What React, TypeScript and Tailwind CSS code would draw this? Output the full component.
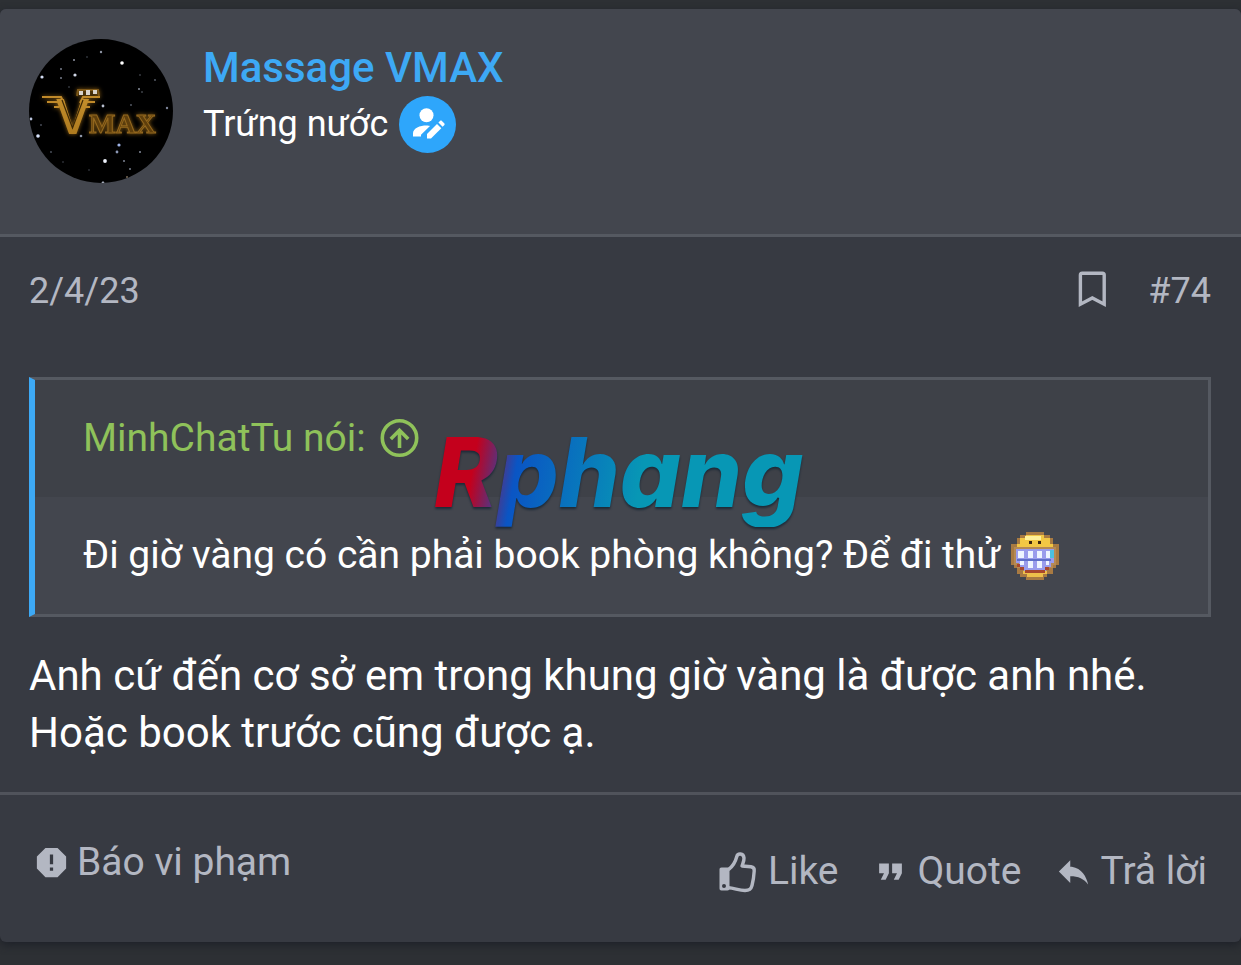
import type { ReactNode } from "react"

const stars = [
  [72, 13, 1.2, "#8d93a1"],
  [45, 21, 1, "#8f95a3"],
  [93, 24, 1.8, "#ffffff"],
  [32, 30, 1, "#777d8b"],
  [32, 39, 1, "#777d8b"],
  [13, 38, 1.6, "#d3dcf2"],
  [46, 36, 1.6, "#cfd6e6"],
  [110, 50, 1, "#8a909e"],
  [113, 53, 0.8, "#6a707c"],
  [126, 41, 0.9, "#5d636f"],
  [111, 36, 0.8, "#5d636f"],
  [138, 69, 1.2, "#7c8498"],
  [2, 80, 1.4, "#b9c4dd"],
  [9, 97, 1.8, "#dbe6ff"],
  [12, 86, 0.9, "#4c515d"],
  [52, 97, 1.3, "#8e96a8"],
  [90, 106, 1.6, "#9fb4e8"],
  [88, 113, 1.4, "#8b97b5"],
  [76, 122, 1.9, "#eef2fc"],
  [111, 113, 1.1, "#7b8190"],
  [95, 122, 1.1, "#757b8a"],
  [101, 130, 1.1, "#6f7583"],
  [98, 138, 1, "#7a6b58"],
  [22, 113, 0.9, "#4f5561"],
  [34, 123, 0.8, "#474c57"],
  [60, 131, 0.8, "#474c57"],
  [74, 67, 1.4, "#b9c0d0"],
  [74, 144, 1.4, "#b9c0d0"],
  [58, 18, 0.8, "#4f5561"],
  [120, 90, 0.8, "#505662"],
  [40, 48, 0.8, "#565c68"],
  [102, 66, 0.9, "#5a606c"],
] as const

function Avatar() {
  return (
    <svg viewBox="0 0 144 144" className="size-36 shrink-0 rounded-full bg-black" role="img" aria-label="Massage VMAX">
      <defs>
        <linearGradient id="gold" x1="0" y1="0" x2="0" y2="1">
          <stop offset="0" stopColor="#c8932f" />
          <stop offset="1" stopColor="#a9751b" />
        </linearGradient>
      </defs>
      {stars.map(([x, y, r, color], i) => (
        <circle key={i} cx={x} cy={y} r={r} fill={color} />
      ))}
      <g className="drop-shadow-[0_0_2px_#8a5e14]">
        {/* Wings */}
        <g fill="none" stroke="#c08a2a" strokeWidth="2">
          <path d="M13 58H32L35 64" />
          <path d="M71 58H54L51 64" />
          <path d="M18 63H29L32 69" />
          <path d="M66 63H57L54 69" />
          <path d="M25 68H30M61 68H55" />
        </g>
        <text x="27" y="95" fontSize="50" className="font-['Liberation_Sans'] font-bold" fill="url(#gold)">V</text>
        <path d="M33 61L43.500 89L54 61" fill="none" stroke="#3c2806" strokeWidth="1.200" />
        {/* Crown */}
        <path d="M48 57L49 51H69L70 57" fill="none" stroke="#7c5717" strokeWidth="2" />
        <g fill="#d9d4cc">
          <rect x="50" y="52" width="4" height="4" />
          <rect x="57" y="51" width="4" height="5" />
          <rect x="64" y="51" width="4" height="4" />
        </g>
      </g>
      <text x="60" y="94" fontSize="28" className="font-['Liberation_Serif'] font-bold drop-shadow-[0_0_2px_#8a5e14]" fill="#5f3f0c" stroke="#94681f" strokeWidth="1">MAX</text>
    </svg>
  )
}

function OwnerBadge() {
  return (
    <svg viewBox="0 0 57 57" className="size-[57px]" role="img" aria-label="Thread starter">
      <circle cx="28.5" cy="28.5" r="28.5" fill="#2ea6fb" />
      <g fill="#fff">
        <circle cx="27.5" cy="19.2" r="7" />
        <path d="M14 40.5V37.2C14 32 21 29.4 27.5 29.4C29.2 29.4 30 29.6 31 30L22 38.800V40.5Z" />
        <path d="M28 42.5V38L38 28L42.300 32.300L32 42.5Z" />
        <path d="M39.400 26.600L41 25C41.600 24.400 42.300 24.400 42.900 25L45.200 27.300C45.800 27.900 45.800 28.600 45.200 29.200L43.600 30.800Z" />
      </g>
    </svg>
  )
}

function GrinSmiley() {
  return (
    <svg viewBox="0 0 48 48" className="size-12 shrink-0" role="img" aria-label="Big grin">
      <path d="M15 0H33V3H39V6H42V12H48V33H45V36H42V42H36V45H33V48H15V45H9V42H6V36H3V33H0V12H6V6H9V3H15Z" fill="#a87a42" />
      <path d="M15 3H33V6H39V12H42V18H6V12H9V6H15Z" fill="#f2c744" />
      <path d="M14 4H30V8H14Z" fill="#fff19a" />
      <path d="M3 15H45V33H42V36H36V42H12V36H6V33H3Z" fill="#b58a55" />
      <path d="M12 39H36V42H32V45H16V42H12Z" fill="#eec04a" />
      <path d="M5 17H43V31H40V35H35V39H13V35H8V31H5Z" fill="#9a9cec" />
      <g fill="#eef4ff">
        <path d="M7 19H13V26H7ZM17 19H22V26H17ZM26 19H31V26H26ZM35 19H39V26H35Z" />
        <path d="M9 29H13V33H9ZM17 29H22V36H17ZM26 29H31V36H26ZM35 29H38V33H35Z" />
      </g>
      <path d="M6 27H40V29H6Z" fill="#5f6fc9" />
      <path d="M39 18H43V26H39Z" fill="#4cc0e0" />
      <path d="M6 32H9V35H13V38H34V35H38V38H34V41H14V38H9V35H6Z" fill="#a8472e" />
      <path d="M18 9H21V12H18ZM27 9H30V12H27Z" fill="#3a2410" />
    </svg>
  )
}

function ThumbIcon() {
  return (
    <svg viewBox="0 0 39 42" className="h-[42px] w-[39px]" aria-hidden="true">
      <path
        d="M3.500 16.500H9.500C10.800 16.500 11.500 17.200 11.500 18.500V37.500C11.500 38.800 10.800 39.500 9.500 39.500H3.500C2.200 39.500 1.500 38.800 1.500 37.500V18.500C1.500 17.200 2.200 16.500 3.500 16.500ZM6 33A2 2 0 1 0 6 37A2 2 0 1 0 6 33Z"
        fill="currentColor"
        fillRule="evenodd"
      />
      <path
        d="M10.500 18.500C14 16 17.500 10.500 18.800 5.500C19.600 2.200 25.500 1.800 26 7C26.200 10 24.800 12.500 24 15L33 15.800C35.500 16.200 36.500 17.800 36.200 20C35.900 25 35.200 30 34 34.500C33 38.500 31 39.500 27 39.500C21 39.500 16 37 10.500 36.800"
        fill="none"
        stroke="currentColor"
        strokeWidth="3.400"
        strokeLinejoin="round"
      />
    </svg>
  )
}

function FooterIcon({ children }: { children: ReactNode }) {
  return (
    <svg viewBox="0 0 24 24" className="size-[39px]" fill="currentColor" aria-hidden="true">
      {children}
    </svg>
  )
}

export default function App() {
  return (
    <main className="min-h-screen bg-[#2d3034] py-[9px] font-[Roboto,sans-serif] text-[#b3b7c2]">
      <article className="relative rounded-md bg-[#373a42] shadow-[0_3px_9px_#1e2129]">
        {/* Author */}
        <header className="flex gap-[30px] rounded-t-md border-b-[3px] border-[#555961] bg-[#43464e] pt-[30px] pr-[30px] pb-[51px] pl-[29px]">
          <Avatar />
          <div>
            <h4 className="text-[42px] leading-[57px] font-medium">
              <a href="#author" className="text-[#3da9f5]">Massage VMAX</a>
            </h4>
            <div className="flex items-center gap-[11px] text-[36px] leading-[57px] text-white">
              <span>Trứng nước</span>
              <OwnerBadge />
            </div>
          </div>
        </header>

        {/* Message */}
        <div className="pt-[30px] pr-[30px] pb-[31px] pl-[29px]">
          <div className="mb-[62px] flex items-center justify-between text-[36px] leading-[48px]">
            <a href="#post">
              <time dateTime="2023-04-02">2/4/23</time>
            </a>
            <div className="flex items-center gap-8">
              <button type="button" aria-label="Bookmark">
                <svg viewBox="0 0 48 48" className="size-12" fill="none" stroke="currentColor" strokeWidth="3.400">
                  <path d="M12.400 37.300V8C12.400 6.800 13 6.200 14.200 6.200H34.400C35.600 6.200 36.200 6.800 36.200 8V37.300L24.300 31Z" />
                </svg>
              </button>
              <a href="#post">#74</a>
            </div>
          </div>

          <blockquote className="border-[3px] border-l-[6px] border-[#555961] border-l-[#3da9f5] bg-[#43464e]">
            <div className="bg-[#3e4148] px-12 py-[30px] text-[39px] leading-[57px] text-[#8fc25a]">
              <a href="#source" className="flex items-center gap-[11px]">
                MinhChatTu nói:
                <svg viewBox="0 0 45 45" className="size-[45px]" fill="none" stroke="currentColor" strokeWidth="3.600" aria-hidden="true">
                  <circle cx="22.5" cy="22" r="17.2" />
                  <path d="M22.5 32V14.500M13.8 23L22.5 14.300L31.2 23" />
                </svg>
              </a>
            </div>
            <div className="flex items-center gap-[11px] px-12 py-[30px] text-[39px] leading-[57px] text-white">
              <span>Đi giờ vàng có cần phải book phòng không? Để đi thử</span>
              <GrinSmiley />
            </div>
          </blockquote>

          <p className="mt-[30px] text-[42px] leading-[57px] text-white">
            Anh cứ đến cơ sở em trong khung giờ vàng là được anh nhé.
            <br />
            Hoặc book trước cũng được ạ.
          </p>
        </div>

        {/* Actions */}
        <footer className="flex items-start justify-between border-t-[3px] border-[#50535b] pt-[39px] pr-[34px] pb-[42px] pl-8 text-[39px] leading-[57px]">
          <button type="button" className="flex items-center gap-[6px]">
            <FooterIcon>
              <path d="M13 13H11V7H13M11 15H13V17H11M15.73 3H8.27L3 8.27V15.73L8.27 21H15.73L21 15.73V8.27L15.73 3Z" />
            </FooterIcon>
            Báo vi phạm
          </button>
          <div className="flex gap-8 pt-[9px]">
            <button type="button" className="flex items-center gap-[11px]">
              <ThumbIcon />
              Like
            </button>
            <button type="button" className="flex items-center gap-2">
              <FooterIcon>
                <path d="M14 17H17L19 13V7H13V13H16M6 17H9L11 13V7H5V13H8L6 17Z" />
              </FooterIcon>
              Quote
            </button>
            <button type="button" className="flex items-center gap-2">
              <FooterIcon>
                <path d="M10 9V5L3 12L10 19V14.9C15 14.9 18.5 16.5 21 20C20 15 17 10 11 9" />
              </FooterIcon>
              Trả lời
            </button>
          </div>
        </footer>

        {/* Site watermark */}
        <span className="pointer-events-none absolute top-[408px] left-[434px] bg-[linear-gradient(100deg,#c4001c_12%,#0a55c4_23%,#0797b5_55%)] bg-clip-text pr-2 font-[Inter,sans-serif] text-[96px] leading-[110px] font-extrabold text-transparent italic drop-shadow-[0_2px_1px_#1c2a38]">
          Rphang
        </span>
      </article>
    </main>
  )
}
